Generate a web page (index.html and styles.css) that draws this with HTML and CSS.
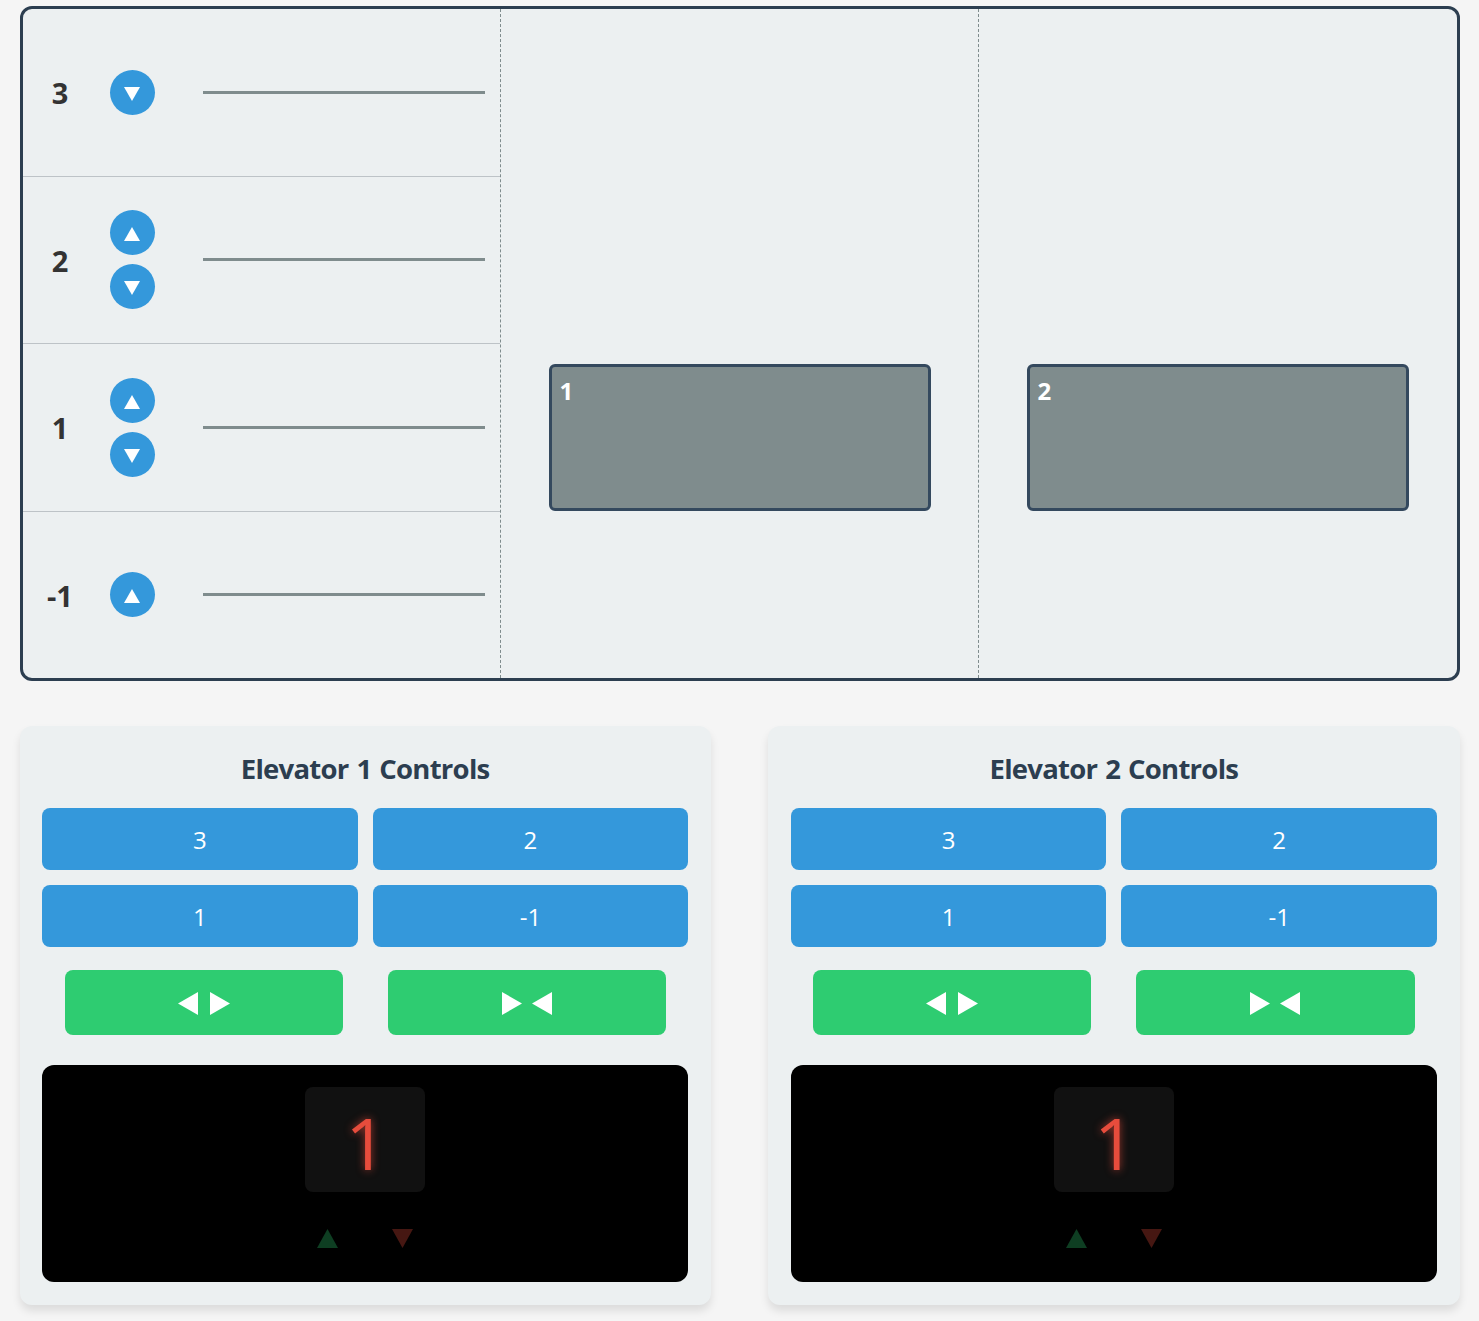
FILE: index.html
```html
<!DOCTYPE html>
<html lang="en">
<head>
<meta charset="utf-8">
<title>Elevator Simulator</title>
<link rel="stylesheet" href="styles.css">
</head>
<body>
<svg width="0" height="0" class="defs">
  <symbol id="up" viewBox="0 0 16 14" preserveAspectRatio="none"><path d="M8 0 16 14H0z"/></symbol>
  <symbol id="down" viewBox="0 0 16 14" preserveAspectRatio="none"><path d="M0 0H16L8 14z"/></symbol>
  <symbol id="left" viewBox="0 0 20 23"><path d="M20 0V23L0 11.5z"/></symbol>
  <symbol id="right" viewBox="0 0 20 23"><path d="M0 0 20 11.5 0 23z"/></symbol>
</svg>
<main class="simulator">
  <section class="building">
    <div class="floors">
      <div class="floor">
        <span class="floor-number">3</span>
        <div class="calls"><button class="call"><svg><use href="#down"/></svg></button></div>
        <div class="platform"></div>
      </div>
      <div class="floor floor-even">
        <span class="floor-number">2</span>
        <div class="calls"><button class="call"><svg><use href="#up"/></svg></button><button class="call"><svg><use href="#down"/></svg></button></div>
        <div class="platform"></div>
      </div>
      <div class="floor">
        <span class="floor-number">1</span>
        <div class="calls"><button class="call"><svg><use href="#up"/></svg></button><button class="call"><svg><use href="#down"/></svg></button></div>
        <div class="platform"></div>
      </div>
      <div class="floor floor-even">
        <span class="floor-number">-1</span>
        <div class="calls"><button class="call"><svg><use href="#up"/></svg></button></div>
        <div class="platform"></div>
      </div>
    </div>
    <div class="shaft"><div class="car">1</div></div>
    <div class="shaft"><div class="car">2</div></div>
  </section>
  <section class="panels">
    <article class="panel">
      <h3>Elevator 1 Controls</h3>
      <div class="keypad"><button>3</button><button>2</button><button>1</button><button>-1</button></div>
      <div class="doors">
        <button class="open"><svg><use href="#left"/></svg><svg><use href="#right"/></svg></button>
        <button class="close"><svg><use href="#right"/></svg><svg><use href="#left"/></svg></button>
      </div>
      <div class="display">
        <div class="digit">1</div>
        <div class="arrows"><svg class="going-up"><use href="#up"/></svg><svg class="going-down"><use href="#down"/></svg></div>
      </div>
    </article>
    <article class="panel">
      <h3>Elevator 2 Controls</h3>
      <div class="keypad"><button>3</button><button>2</button><button>1</button><button>-1</button></div>
      <div class="doors">
        <button class="open"><svg><use href="#left"/></svg><svg><use href="#right"/></svg></button>
        <button class="close"><svg><use href="#right"/></svg><svg><use href="#left"/></svg></button>
      </div>
      <div class="display">
        <div class="digit">1</div>
        <div class="arrows"><svg class="going-up"><use href="#up"/></svg><svg class="going-down"><use href="#down"/></svg></div>
      </div>
    </article>
  </section>
</main>
</body>
</html>
```
FILE: styles.css
```css
* {
  box-sizing: border-box;
}

body {
  margin: 0;
  padding-top: 6px;
  height: 1321px;
  overflow: hidden;
  background: #f5f5f5;
  color: #333;
  font-family: "Segoe UI", "Open Sans", "Noto Sans", sans-serif;
}

.defs {
  display: none;
}

button {
  border: 0;
  padding: 0;
  color: #fff;
  font-family: inherit;
}

svg {
  display: block;
  fill: currentColor;
}

.simulator {
  width: 1440px;
  margin: 0 auto;
}

.building {
  display: grid;
  grid-template-columns: repeat(3, 1fr);
  height: 675px;
  border: 3px solid #2c3e50;
  border-radius: 12px;
  background: #ecf0f1;
  overflow: hidden;
}

.floors {
  display: grid;
  grid-template-rows: 168px 167px 168px 166px;
  border-right: 1px dashed #7f8c8d;
}

.floor {
  display: grid;
  grid-template-columns: 73px 73px 1fr;
  align-items: center;
  padding-right: 15px;
  border-bottom: 1px solid #bdc3c7;
}

.floor-even {
  padding-bottom: 1px;
}

.floor:last-child {
  border-bottom: 0;
}

.floor-number {
  padding-left: 2px;
  text-align: center;
  font-size: 29px;
  font-weight: 700;
}

.floor-even .floor-number {
  padding-top: 2px;
}

.calls {
  display: flex;
  flex-direction: column;
  align-items: center;
  gap: 9px;
}

.call {
  display: grid;
  place-items: center;
  width: 45px;
  height: 45px;
  padding-top: 3px;
  border-radius: 50%;
  background: #3498db;
}

.call svg {
  width: 16px;
  height: 14px;
}

.platform {
  height: 3px;
  margin-left: 34px;
  background: #7f8c8d;
}

.shaft {
  display: flex;
  align-items: flex-end;
  padding: 0 0 167px 48px;
  border-right: 1px dashed #7f8c8d;
}

.shaft:last-child {
  border-right: 0;
}

.car {
  width: 382px;
  height: 147px;
  padding: 6px 8px;
  border: 3px solid #34495e;
  border-radius: 6px;
  background: #7f8c8d;
  color: #fff;
  font-size: 24px;
  font-weight: 700;
  line-height: 35px;
}

.panels {
  display: grid;
  grid-template-columns: 1fr 1fr;
  gap: 57.5px;
  margin-top: 45px;
}

.panel {
  height: 579px;
  padding: 22px 22.5px;
  border-radius: 12px;
  background: #ecf0f1;
  box-shadow: 0 6px 9px rgba(0, 0, 0, 0.1);
}

.panel h3 {
  margin: 0 0 19px;
  color: #2c3e50;
  text-align: center;
  font-size: 27.5px;
  font-weight: 700;
  letter-spacing: -0.75px;
  word-spacing: 1.5px;
  line-height: 41px;
}

.keypad {
  display: grid;
  grid-template-columns: 1fr 1fr;
  gap: 15px;
}

.keypad button {
  height: 62px;
  padding-top: 1px;
  border-radius: 8px;
  background: #3498db;
  font-size: 24px;
}

.doors {
  display: grid;
  grid-template-columns: 1fr 1fr;
  gap: 45px;
  margin: 23px 22.5px 30px;
}

.doors button {
  display: flex;
  justify-content: center;
  align-items: center;
  height: 65px;
  padding-top: 2px;
  border-radius: 8px;
  background: #2ecc71;
}

.doors svg {
  width: 20px;
  height: 23px;
}

.open {
  gap: 12px;
}

.close {
  gap: 10px;
}

.display {
  display: flex;
  flex-direction: column;
  align-items: center;
  height: 217px;
  padding-top: 22px;
  border-radius: 12px;
  background: #000;
}

.digit {
  width: 120px;
  height: 105px;
  padding-left: 2px;
  border-radius: 8px;
  background: #111;
  color: #e74c3c;
  text-align: center;
  font-size: 72px;
  line-height: 111px;
  text-shadow: 0 0 8px rgba(231, 76, 60, 0.7);
}

.arrows {
  display: flex;
  gap: 54px;
  margin-top: 37px;
}

.arrows svg {
  width: 21px;
  height: 19px;
  opacity: 0.3;
}

.going-up {
  color: #2ecc71;
}

.going-down {
  color: #e74c3c;
}
```
